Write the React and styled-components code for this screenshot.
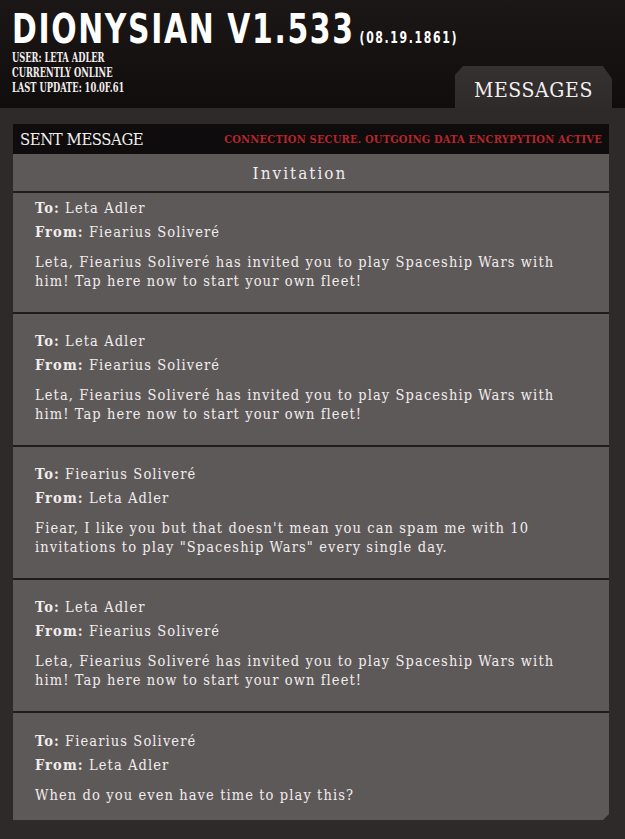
import React from "react";
import styled, { createGlobalStyle } from "styled-components";

const GlobalStyle = createGlobalStyle`
  html, body { margin: 0; padding: 0; background: #2e2a29; }
  * { box-sizing: border-box; }
`;

const Page = styled.div`
  width: 625px;
  min-height: 839px;
  background: #2e2a29;
  overflow: hidden;
`;

const Header = styled.header`
  height: 108px;
  background: linear-gradient(180deg, #1b1716 0%, #141110 60%, #100e0d 100%);
  display: flex;
  justify-content: space-between;
  align-items: flex-end;
`;

const Brand = styled.div`
  align-self: flex-start;
  flex: 1 1 auto;
  min-width: 0;
  padding: 11px 0 0 12px;
`;

const TitleRow = styled.div`
  display: flex;
  align-items: baseline;
  gap: 6px;
  transform: scaleX(${(p) => p.$sx});
  transform-origin: left top;
  white-space: nowrap;
  font-family: "DejaVu Sans Condensed", "DejaVu Sans", sans-serif;
  font-weight: 700;
  color: #ffffff;
`;

const Title = styled.span`
  font-size: 41px;
  line-height: 37px;
  letter-spacing: 2px;
`;

const DateStamp = styled.span`
  font-size: 15px;
  letter-spacing: 2px;
`;

const Meta = styled.div`
  margin-top: 2px;
  font-family: "DejaVu Serif Condensed", "DejaVu Serif", serif;
  font-weight: 700;
  font-size: 12.5px;
  line-height: 15px;
  color: #f2eeee;
  transform: scaleX(0.74);
  transform-origin: left top;
  white-space: nowrap;
`;

const Tab = styled.div`
  flex: 0 0 157px;
  height: 42px;
  margin-right: 13px;
  background: linear-gradient(180deg, #353131 0%, #2f2b2b 100%);
  clip-path: polygon(8px 0, calc(100% - 9px) 0, 100% 13px, 100% 100%, 0 100%, 0 9px);
  display: flex;
  justify-content: center;
  padding-top: 13px;
  font-family: "DejaVu Serif Condensed", "DejaVu Serif", serif;
  font-size: 21px;
  line-height: 22px;
  letter-spacing: 0.6px;
  color: #f4f0f0;
  white-space: nowrap;
`;

const Content = styled.main`
  padding: 16px 16px 18px 13px;
`;

const Panel = styled.section`
  background: #5e5959;
  clip-path: polygon(0 0, 100% 0, 100% calc(100% - 6px), calc(100% - 6px) 100%, 0 100%);
`;

const SentBar = styled.div`
  height: 30px;
  background: #0e0c0c;
  display: flex;
  align-items: center;
  justify-content: space-between;
  padding: 0 7px 0 7px;
`;

const SentTitle = styled.span`
  font-family: "DejaVu Serif Condensed", "DejaVu Serif", serif;
  font-size: 16.5px;
  color: #f2eeee;
  letter-spacing: -0.4px;
`;

const Secure = styled.span`
  font-family: "DejaVu Serif Condensed", "DejaVu Serif", serif;
  font-weight: 700;
  font-size: 11px;
  color: #b5252a;
  letter-spacing: 0.2px;
`;

const SectionTitle = styled.div`
  height: 37px;
  display: flex;
  align-items: center;
  justify-content: center;
  padding-right: 22px;
  font-family: "DejaVu Serif Condensed", "DejaVu Serif", serif;
  font-size: 17px;
  letter-spacing: 2px;
  color: #f0ecec;
`;

const Message = styled.article`
  border-top: 2px solid #1f1c1c;
  padding: 17px 16px 21px 22px;
  font-family: "DejaVu Serif Condensed", "DejaVu Serif", serif;
  font-size: 14.5px;
  letter-spacing: 1.1px;
  color: #f1eded;

  &:first-of-type { padding-top: 5px; }
  &:last-of-type { padding-top: 18px; padding-bottom: 15px; }
`;

const Field = styled.div`
  line-height: 20px;
  & + & { margin-top: 4px; }
`;

const Label = styled.b`
  font-weight: 700;
`;

const Body = styled.p`
  margin: 11px 0 0;
  line-height: 19px;
`;

const messages = [
  {
    to: "Leta Adler",
    from: "Fiearius Soliveré",
    body: "Leta, Fiearius Soliveré has invited you to play Spaceship Wars with him! Tap here now to start your own fleet!",
  },
  {
    to: "Leta Adler",
    from: "Fiearius Soliveré",
    body: "Leta, Fiearius Soliveré has invited you to play Spaceship Wars with him! Tap here now to start your own fleet!",
  },
  {
    to: "Fiearius Soliveré",
    from: "Leta Adler",
    body: "Fiear, I like you but that doesn't mean you can spam me with 10 invitations to play \"Spaceship Wars\" every single day.",
  },
  {
    to: "Leta Adler",
    from: "Fiearius Soliveré",
    body: "Leta, Fiearius Soliveré has invited you to play Spaceship Wars with him! Tap here now to start your own fleet!",
  },
  {
    to: "Fiearius Soliveré",
    from: "Leta Adler",
    body: "When do you even have time to play this?",
  },
];

export default function App() {
  return (
    <Page>
      <GlobalStyle />
      <Header>
        <Brand>
          <TitleRow $sx={0.81}>
            <Title>DIONYSIAN V1.533</Title>
            <DateStamp>(08.19.1861)</DateStamp>
          </TitleRow>
          <Meta>
            <div>USER: LETA ADLER</div>
            <div>CURRENTLY ONLINE</div>
            <div>LAST UPDATE: 10.0F.61</div>
          </Meta>
        </Brand>
        <Tab>MESSAGES</Tab>
      </Header>
      <Content>
        <Panel>
          <SentBar>
            <SentTitle>SENT MESSAGE</SentTitle>
            <Secure>CONNECTION SECURE. OUTGOING DATA ENCRYPYTION ACTIVE</Secure>
          </SentBar>
          <SectionTitle>Invitation</SectionTitle>
          {messages.map((m, i) => (
            <Message key={i}>
              <Field>
                <Label>To:</Label> {m.to}
              </Field>
              <Field>
                <Label>From:</Label> {m.from}
              </Field>
              <Body>{m.body}</Body>
            </Message>
          ))}
        </Panel>
      </Content>
    </Page>
  );
}
